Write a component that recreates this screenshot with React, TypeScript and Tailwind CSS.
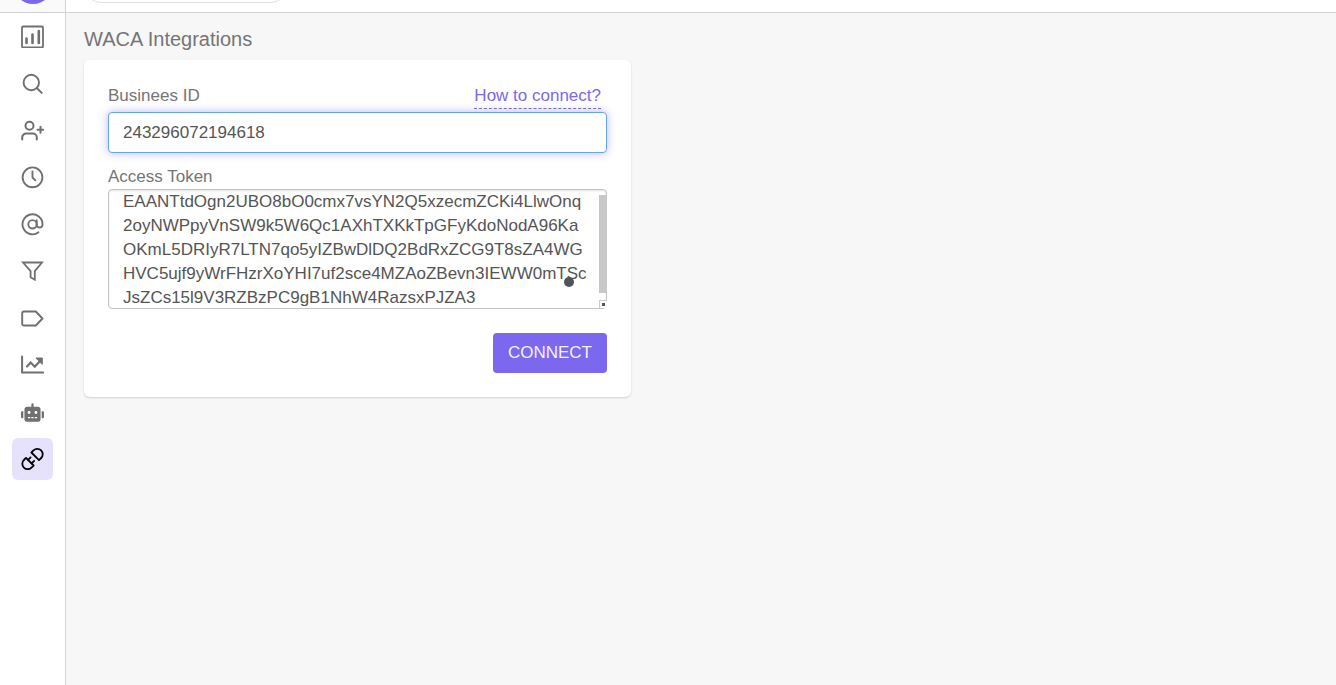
import { ReactNode, useState } from 'react'
import { FaRobot } from 'react-icons/fa'

type NavItemProps = {
  label: string,
  active?: boolean,
  children: ReactNode,
}

const token = 'EAANTtdOgn2UBO8bO0cmx7vsYN2Q5xzecmZCKi4LlwOnq2oyNWPpyVnSW9k5W6Qc1AXhTXKkTpGFyKdoNodA96KaOKmL5DRIyR7LTN7qo5yIZBwDlDQ2BdRxZCG9T8sZA4WGHVC5ujf9yWrFHzrXoYHI7uf2sce4MZAoZBevn3IEWW0mTScJsZCs15l9V3RZBzPC9gB1NhW4RazsxPJZA3'

function NavItem({ label, active, children }: NavItemProps) {
  return (
    <a
      href="#"
      aria-label={label}
      className={`w-[41px] h-[42px] flex items-center justify-center rounded-md ${active ? 'bg-[#e7e2fb] text-black' : 'text-[#707070]'}`}
    >
      {children}
    </a>
  )
}

function LineIcon({ children }: { children: ReactNode }) {
  return (
    <svg width="23" height="24" viewBox="0.5 0 23 24" fill="none" stroke="currentColor" strokeWidth="2" strokeLinecap="round" strokeLinejoin="round">
      {children}
    </svg>
  )
}

function Sidebar() {
  return (
    <nav className="w-[66px] shrink-0 flex flex-col items-center gap-[5px] pt-0.5 bg-white border-r border-[#d3d3d3]">
      <NavItem label="Dashboard">
        <LineIcon>
          <rect x="1.5" y="2.5" width="21" height="21" rx="1.2" strokeWidth="1.8" />
          <path d="M6 14.5v4.500M12 10.5v8.500M18.300 7v12" strokeWidth="2.6" />
        </LineIcon>
      </NavItem>
      <NavItem label="Search">
        <LineIcon>
          <circle cx="10.8" cy="11.5" r="7.7" strokeWidth="1.9" />
          <path d="M16.5 17.2l4.7 4.7" />
        </LineIcon>
      </NavItem>
      <NavItem label="Contacts">
        <LineIcon>
          <circle cx="9" cy="7.8" r="4" />
          <path d="M1.7 21.5v-2a4 4 0 0 1 4-4h6.6a4 4 0 0 1 4 4v2M20 8.8v6M17 11.8h6" />
        </LineIcon>
      </NavItem>
      <NavItem label="History">
        <LineIcon>
          <circle cx="12" cy="12.3" r="9.9" strokeWidth="1.9" />
          <path d="M12 6.5v6l2.8 2.8" strokeWidth="1.9" />
        </LineIcon>
      </NavItem>
      <NavItem label="Mentions">
        <LineIcon>
          <circle cx="12" cy="12.3" r="4.2" strokeWidth="1.9" />
          <path d="M16.2 8.3v5a3 3 0 0 0 5.8 0v-1a10 10 0 1 0-4 8" strokeWidth="1.9" />
        </LineIcon>
      </NavItem>
      <NavItem label="Filters">
        <LineIcon>
          <path d="M2.5 3.5h19l-7.2 8.6v8.6l-4.2-2.4v-6.2z" strokeWidth="1.8" strokeLinejoin="miter" />
        </LineIcon>
      </NavItem>
      <NavItem label="Labels">
        <LineIcon>
          <path d="M3.5 5.5h11.8l6.7 7-6.7 7H3.5a1.8 1.8 0 0 1-1.8-1.8V7.3a1.8 1.8 0 0 1 1.8-1.8z" strokeWidth="1.9" />
        </LineIcon>
      </NavItem>
      <NavItem label="Analytics">
        <LineIcon>
          <path d="M1.6 3.5v16.1h21" strokeLinejoin="miter" />
          <path d="M6.5 13.5l3.6-4 4.2 4.2 5.5-6" strokeWidth="2.2" strokeLinejoin="miter" />
          <path d="M15.8 5h6v6z" fill="currentColor" strokeWidth="1" />
        </LineIcon>
      </NavItem>
      <NavItem label="Bots">
        <FaRobot size={23} />
      </NavItem>
      <NavItem label="Integrations" active>
        <LineIcon>
          <g transform="translate(12 12) rotate(-45)" strokeWidth="1.8">
            <path d="M3.8-5.4h3a5.4 5.4 0 0 1 0 10.8h-3z" />
            <path d="M-3.8-5.4h-3a5.4 5.4 0 0 0 0 10.8h3z" />
            <path d="M-3.8-2.5h3.6M-3.8 2.5h3.6" />
          </g>
        </LineIcon>
      </NavItem>
    </nav>
  )
}

function Header() {
  return (
    <header className="h-[13px] shrink-0 flex overflow-hidden border-b border-[#d3d3d3] bg-white">
      <div className="w-[66px] shrink-0 flex items-end justify-center pb-2 bg-[#fafafa] border-r border-[#d3d3d3]">
        <div className="size-10 shrink-0 rounded-full bg-[#7b68ee]" />
      </div>
      <div className="flex items-end pl-4 pb-[9px]">
        <div className="w-52 h-10 rounded-full border border-[#e2e2e2]" />
      </div>
    </header>
  )
}

function TokenField() {
  const [value, setValue] = useState(token)
  return (
    <div className="flex flex-col">
      <label htmlFor="token" className="leading-6">Access Token</label>
      <div className="relative flex">
        <textarea
          id="token"
          value={value}
          onChange={(e) => setValue(e.target.value)}
          spellCheck={false}
          className="w-full h-[120px] pl-[14px] pr-[17px] leading-6 break-all resize-none overflow-hidden rounded-[4px] border border-[#c4c4c4] bg-white text-[#555] outline-none shadow-[inset_0_1px_2px_rgba(0,0,0,0.12)]"
        />
        <div className="absolute right-0 top-1.5 w-2 h-[98px] bg-[#c8c8c8]" />
        <div className="absolute right-0 bottom-px size-2 flex items-center justify-center border-l border-t border-[#ccc] bg-white">
          <div className="size-[3px] bg-[#555]" />
        </div>
        <div className="absolute right-[33px] bottom-[22px] size-[10px] rounded-full bg-[#4f5459]" />
      </div>
    </div>
  )
}

function IntegrationCard() {
  const [businessId, setBusinessId] = useState('243296072194618')
  return (
    <form className="max-w-[547px] flex flex-col p-6 rounded-md bg-white shadow-[0_1px_2px_rgba(0,0,0,0.16)]" onSubmit={(e) => e.preventDefault()}>
      <div className="flex justify-between pr-1.5">
        <label htmlFor="business" className="leading-6">Businees ID</label>
        <a href="#" className="leading-6 border-b border-dashed border-[#7b68ee] text-[#7b68ee]">How to connect?</a>
      </div>
      <input
        id="business"
        value={businessId}
        onChange={(e) => setBusinessId(e.target.value)}
        className="w-full h-[41px] mt-[3px] mb-3 px-[14px] rounded-[4px] border border-[#62a8ea] bg-white text-[#555] outline-none shadow-[0_0_8px_rgba(123,104,238,0.5)]"
      />
      <TokenField />
      <button type="submit" className="self-end mt-6 h-10 px-[15px] rounded-[4px] bg-[#7b68ee] text-[#f3f1fe]">CONNECT</button>
    </form>
  )
}

export default function App() {
  return (
    <div className="min-h-screen flex flex-col bg-[#f7f7f7] text-[17px] text-[#757575] font-['Liberation_Sans',Arial,sans-serif]">
      <Header />
      <div className="flex grow">
        <Sidebar />
        <main className="grow pl-[18px] pr-4 pt-3">
          <h1 className="mb-[7px] text-xl">WACA Integrations</h1>
          <IntegrationCard />
        </main>
      </div>
    </div>
  )
}
